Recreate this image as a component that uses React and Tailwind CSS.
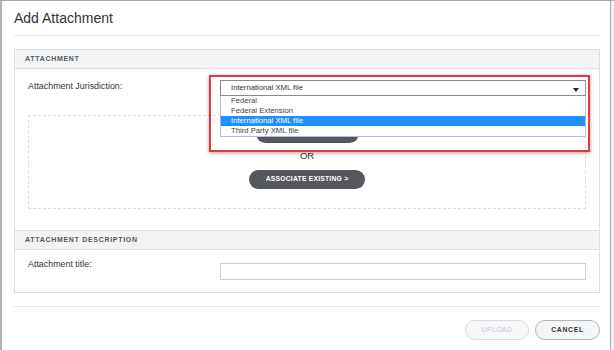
import React from "react";

const options = ["Federal", "Federal Extension", "International XML file", "Third Party XML file"];

const SectionHeader = ({ children }) => (
  <div className="h-[19px] bg-[#f2f3f5] border-b border-[#dcdee1] pl-[10px] flex items-center text-[7px] font-bold tracking-[0.7px] text-[#555a60]">
    {children}
  </div>
);

const App = () => {
  const selected = "International XML file";

  return (
    <div
      className="w-[614px] h-[350px] flex bg-[#f3f3f3] border-t border-[#a8a8a8] overflow-hidden"
      style={{ fontFamily: '"Liberation Sans", Arial, sans-serif' }}
    >
      <div className="w-[2px] bg-[#b4b4b4]" />
      <div className="relative w-[609px] h-full bg-white border-r border-[#a8a8a8] pl-[12px] pr-[10px]">
        {/* title */}
        <div className="pt-[9px] pb-[9px] border-b border-[#e8e8e8] text-[14px] leading-[16px] text-[#333]">
          Add Attachment
        </div>

        {/* attachment panels */}
        <div className="mt-[13px] border border-[#dcdee1]">
          <SectionHeader>ATTACHMENT</SectionHeader>
          <div className="px-[13px] pt-[11px] pb-[21px]">
            <div className="flex items-start">
              <div className="w-[192px] text-[8.9px] leading-[10px] pt-px text-[#333]">
                Attachment Jurisdiction:
              </div>
              <div className="relative flex-1">
                <div className="h-[16px] border border-[#8a8a8a] bg-white flex items-center justify-between pl-[10px] pr-[6px] text-[7.7px] text-[#333]">
                  <span>{selected}</span>
                  <span className="w-0 h-0 border-l-[3px] border-r-[3px] border-t-[4px] border-l-transparent border-r-transparent border-t-[#222] mt-[3px]" />
                </div>
                {/* open dropdown list */}
                <div className="absolute left-0 right-0 top-[16px] z-20 bg-white border border-[#a9c1e4] border-t-0">
                  {options.map((o) => (
                    <div
                      key={o}
                      className={`h-[10px] leading-[10px] pl-[10px] text-[7.7px] ${
                        o === selected ? "bg-[#1e90ff] text-white" : "text-[#444]"
                      }`}
                    >
                      {o}
                    </div>
                  ))}
                </div>
              </div>
            </div>

            {/* drop zone */}
            <div className="mt-[19px] h-[94px] border border-dashed border-[#dedede] flex flex-col items-center pt-[8px]">
              {/* upload button, mostly hidden behind the open list */}
              <button aria-label="Upload file" className="h-[19px] w-[103px] rounded-full bg-[#56575c]" />
              <div className="mt-[7px] text-[9.5px] leading-[12px] text-[#333]">OR</div>
              <button className="mt-[8px] h-[19px] w-[116px] rounded-full bg-[#56575c] text-white text-[6.8px] font-bold tracking-[0.2px]">
                ASSOCIATE EXISTING &gt;
              </button>
            </div>
          </div>

          <div className="border-t border-[#dcdee1]">
            <SectionHeader>ATTACHMENT DESCRIPTION</SectionHeader>
            <div className="px-[13px] pt-[9px] pb-[12px] flex items-start">
              <div className="w-[192px] text-[8.9px] leading-[10px] text-[#333]">Attachment title:</div>
              <input
                type="text"
                className="flex-1 mt-[4px] h-[17px] border border-[#cfcfcf] bg-white outline-none"
              />
            </div>
          </div>
        </div>

        {/* footer */}
        <div className="mt-[13px] border-t border-[#e8e8e8] pt-[13px] flex justify-end gap-[6px]">
          <button className="h-[20px] w-[64px] rounded-full border border-[#d9dde2] bg-[#f7f8fa] text-[#c3c7cc] text-[6.8px] tracking-[0.5px]">
            UPLOAD
          </button>
          <button className="h-[20px] w-[65px] rounded-full border border-[#b3b3b3] bg-[#f4f5f6] text-[#333] text-[6.8px] font-bold tracking-[0.7px]">
            CANCEL
          </button>
        </div>

        {/* red highlight annotation */}
        <div className="absolute left-[207px] top-[74px] w-[381px] h-[77px] border-2 border-[#e4383e] shadow-[0_1px_4px_rgba(0,0,0,0.35)] z-30 pointer-events-none" />
      </div>
    </div>
  );
};

export default App;
